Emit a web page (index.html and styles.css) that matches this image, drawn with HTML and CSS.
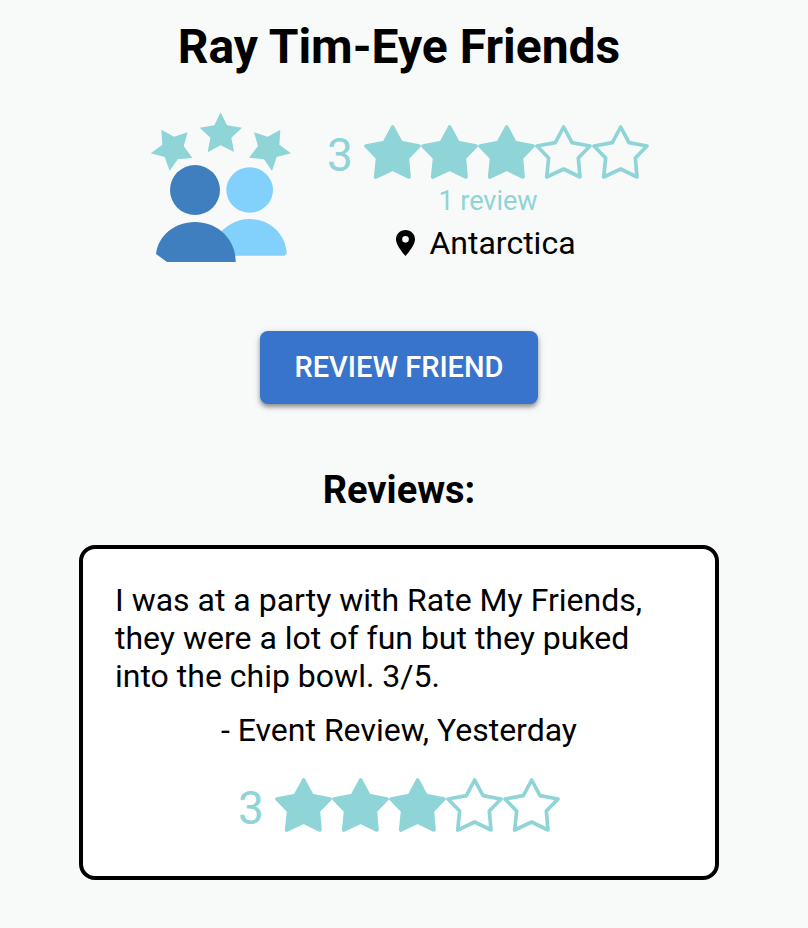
FILE: index.html
```
<!DOCTYPE html>
<html lang="en">
<head>
  <meta charset="utf-8">
  <meta name="viewport" content="width=device-width, initial-scale=1">
  <title>Ray Tim-Eye Friends</title>
  <link rel="stylesheet" href="styles.css">
</head>
<body>
  <svg class="sprite" aria-hidden="true">
    <symbol id="star" viewBox="0 0 171 162">
      <path d="M86 6 L111 53 L165 63 L130 99 L135 156 L86 132 L35 156 L41 99 L6 63 L61 53 Z" stroke-width="11" stroke-linejoin="round"/>
    </symbol>
  </svg>
  <main class="page">
    <h1 class="title">Ray Tim-Eye Friends</h1>
    <section class="profile">
      <svg class="logo" viewBox="30 36 432 450" aria-hidden="true">
        <g class="logo-stars">
          <path d="M245 37 L264 76 L309 83 L277 113 L285 156 L245 136 L206 157 L214 113 L182 83 L226 76 Z"/>
          <path d="M67 89 L105 110 L146 97 L134 138 L160 174 L116 178 L92 213 L77 171 L35 160 L70 134 Z"/>
          <path d="M424 89 L386 110 L345 97 L357 138 L330 173 L375 178 L399 213 L413 171 L456 160 L421 134 Z"/>
        </g>
        <g class="logo-back">
          <ellipse cx="332" cy="270" rx="70" ry="68"/>
          <path d="M225 467 V420 Q270 357 332 357 C390 357 440 400 443 460 L437 467 Z"/>
        </g>
        <g class="logo-front">
          <circle cx="168" cy="270" r="75"/>
          <path d="M84 486 L51 462 C57 408 105 366 168 366 C235 366 290 416 290 486 Z"/>
        </g>
      </svg>
      <div class="summary">
        <div class="rating">
          <span class="score">3</span>
          <span class="stars" role="img" aria-label="3 out of 5 stars">
            <svg class="star full"><use href="#star"/></svg><svg class="star full"><use href="#star"/></svg><svg class="star full"><use href="#star"/></svg><svg class="star"><use href="#star"/></svg><svg class="star"><use href="#star"/></svg>
          </span>
        </div>
        <p class="count">1 review</p>
        <p class="location">
          <svg class="pin" viewBox="0 0 57 78" aria-hidden="true"><path fill-rule="evenodd" d="M28.500 0C12.500 0 0 12 0 28C0 48 28.500 78 28.500 78S57 48 57 28C57 12 44.500 0 28.500 0ZM28.500 18a10 10 0 1 1 0 20a10 10 0 1 1 0-20Z"/></svg>
          <span>Antarctica</span>
        </p>
      </div>
    </section>
    <button class="review-button" type="button">Review Friend</button>
    <h2 class="subtitle">Reviews:</h2>
    <article class="card">
      <p class="quote">I was at a party with Rate My Friends, they were a lot of fun but they puked into the chip bowl. 3/5.</p>
      <p class="byline">- Event Review, Yesterday</p>
      <div class="rating">
        <span class="score">3</span>
        <span class="stars" role="img" aria-label="3 out of 5 stars">
          <svg class="star full"><use href="#star"/></svg><svg class="star full"><use href="#star"/></svg><svg class="star full"><use href="#star"/></svg><svg class="star"><use href="#star"/></svg><svg class="star"><use href="#star"/></svg>
        </span>
      </div>
    </article>
  </main>
</body>
</html>
```
FILE: styles.css
```
* {
  box-sizing: border-box;
}

body {
  margin: 0;
  background: #f8faf9;
  color: #000;
  font-family: Roboto, "Liberation Sans", sans-serif;
  font-size: 32px;
  line-height: 38px;
}

h1, h2, p {
  margin: 0;
}

.sprite {
  display: none;
}

.page {
  display: flex;
  flex-direction: column;
  align-items: center;
  padding: 19px 18px 48px 8px;
}

.title {
  font-size: 48px;
  line-height: 56px;
  font-weight: 700;
  text-align: center;
}

.profile {
  display: flex;
  align-items: flex-end;
  gap: 34px;
  margin-top: 37px;
}

.logo {
  width: 144px;
  height: 150px;
}

.logo-stars {
  fill: #8fd4d7;
}

.logo-back {
  fill: #82d0fc;
}

.logo-front {
  fill: #3f7fbf;
}

.summary {
  display: flex;
  flex-direction: column;
  align-items: center;
}

.rating {
  display: flex;
  justify-content: center;
  gap: 11px;
  color: #8fd4d7;
}

.score {
  font-size: 46px;
  line-height: 60px;
}

.stars {
  display: flex;
}

.star {
  width: 57px;
  height: 54px;
  fill: none;
  stroke: currentColor;
}

.full {
  fill: currentColor;
}

.count {
  color: #8fd4d7;
  font-size: 27px;
  line-height: 32px;
}

.location {
  display: flex;
  align-items: center;
  gap: 14px;
  margin-top: 7px;
  padding-right: 4px;
}

.pin {
  width: 19px;
  height: 26px;
}

.review-button {
  margin-top: 69px;
  padding: 12px 34px;
  border: 0;
  border-radius: 8px;
  background: #3873cc;
  color: #fff;
  font: 500 29px/49px Roboto, "Liberation Sans", sans-serif;
  text-transform: uppercase;
  box-shadow: 0 3px 4px rgba(0, 0, 0, 0.35), 0 2px 8px rgba(0, 0, 0, 0.15);
}

.subtitle {
  margin-top: 64px;
  font-size: 38px;
  line-height: 44px;
  font-weight: 700;
}

.card {
  width: 100%;
  max-width: 640px;
  margin-top: 33px;
  padding: 32px 32px 38px;
  border: 4px solid #000;
  border-radius: 16px;
  background: #fff;
}

.byline {
  margin: 16px 0 29px;
  text-align: center;
}
```
